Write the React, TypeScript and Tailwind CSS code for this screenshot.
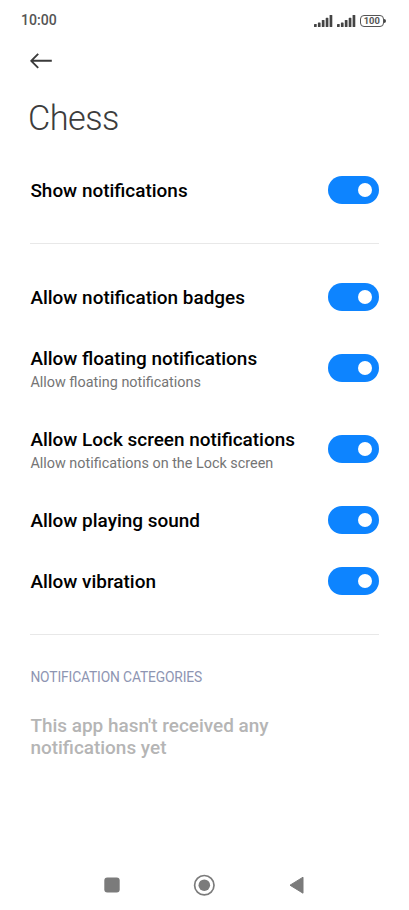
import React from "react";

function Toggle() {
  return (
    <span role="switch" aria-checked="true" className="flex h-7 w-[51px] shrink-0 items-center justify-end rounded-full bg-[#0d84ff] pr-[7.5px]">
      <span className="size-[14px] rounded-full bg-white" />
    </span>
  );
}

function Row({ title, note, className }: { title: string; note?: string; className: string }) {
  return (
    <div className={`flex items-center justify-between ${className}`}>
      <div className={note ? "pt-[5px] pl-[0.4px]" : "pt-[2px] pl-[0.4px]"}>
        <div className="text-[18.95px] leading-6 font-medium whitespace-nowrap text-black">{title}</div>
        {note && <div className="text-[14.4px] leading-6 whitespace-nowrap text-[#757575]">{note}</div>}
      </div>
      <Toggle />
    </div>
  );
}

function Signal() {
  return (
    <svg width="19" height="12" viewBox="0 0 19 12" fill="#444">
      <rect x="0" y="9" width="2.7" height="3" rx=".6" />
      <rect x="3.9" y="7.5" width="2.7" height="4.5" rx=".6" />
      <rect x="7.8" y="5" width="2.7" height="7" rx=".6" />
      <rect x="11.7" y="2.8" width="2.7" height="9.2" rx=".6" />
      <rect x="15.6" y="0" width="2.7" height="12" rx=".6" />
    </svg>
  );
}

export default function App() {
  return (
    <div className="flex h-[910px] w-[409px] flex-col overflow-hidden bg-white pt-px font-['Roboto',sans-serif]">
      <header className="flex h-[39px] items-center justify-between pr-[23px] pl-[21px]">
        <span className="text-[14.1px] font-medium text-[#555]">10:00</span>
        <div className="flex items-center gap-1">
          <Signal />
          <Signal />
          <div className="flex items-center">
            <span className="flex h-3 w-[24.5px] items-center justify-center rounded-[4px] border border-[#555] text-[9.4px] leading-[10px] font-bold text-[#555]">100</span>
            <span className="h-1 w-[2px] rounded-r bg-[#444]" />
          </div>
        </div>
      </header>
      <div className="flex h-[42px] items-center pl-[30px]">
        <svg width="23" height="18" viewBox="0 0 23 18" fill="none" stroke="#3a3a3a" strokeWidth="1.9">
          <path d="M8.2 1.8 1.2 8.8l7 7M1.2 8.8H21.8" strokeLinejoin="round" />
        </svg>
      </div>
      <h1 className="mt-[14px] pl-[28px] text-[34.3px] leading-[44px] font-light tracking-[-0.55px] text-[#3c3c3c]">Chess</h1>
      <main className="pr-[30px] pl-[30px]">
        <Row title="Show notifications" className="mt-[26px] h-12" />
        <div className="mt-[29px] h-px bg-[#e8e8e8]" />
        <Row title="Allow notification badges" className="mt-[29px] h-12" />
        <Row title="Allow floating notifications" note="Allow floating notifications" className="mt-[23px] h-12" />
        <Row title="Allow Lock screen notifications" note="Allow notifications on the Lock screen" className="mt-[33px] h-12" />
        <Row title="Allow playing sound" className="mt-[23px] h-12" />
        <Row title="Allow vibration" className="mt-[13px] h-12" />
        <div className="mt-[29px] h-px bg-[#e8e8e8]" />
        <h2 className="mt-[32px] pl-[0.4px] text-[13.8px] leading-5 tracking-[-0.13px] text-[#8e95b2]">NOTIFICATION CATEGORIES</h2>
        <p className="mt-[28px] pl-[0.4px] text-[18.95px] leading-[22px] font-medium text-[#b5b5b5]">This app hasn't received any<br />notifications yet</p>
      </main>
      <nav className="mt-auto flex h-[50px] items-center pl-[104px]">
        <svg width="202" height="22" viewBox="0 0 202 22" fill="#7b7b7b">
          <rect x="0.3" y="3.5" width="15.4" height="15" rx="3" />
          <circle cx="100.3" cy="11.2" r="9.7" fill="none" stroke="#7b7b7b" strokeWidth="1.7" />
          <circle cx="100.3" cy="11.2" r="5.8" />
          <path d="M186 11.2 199 3.2v16z" stroke="#7b7b7b" strokeWidth="1" strokeLinejoin="round" />
        </svg>
      </nav>
    </div>
  );
}
